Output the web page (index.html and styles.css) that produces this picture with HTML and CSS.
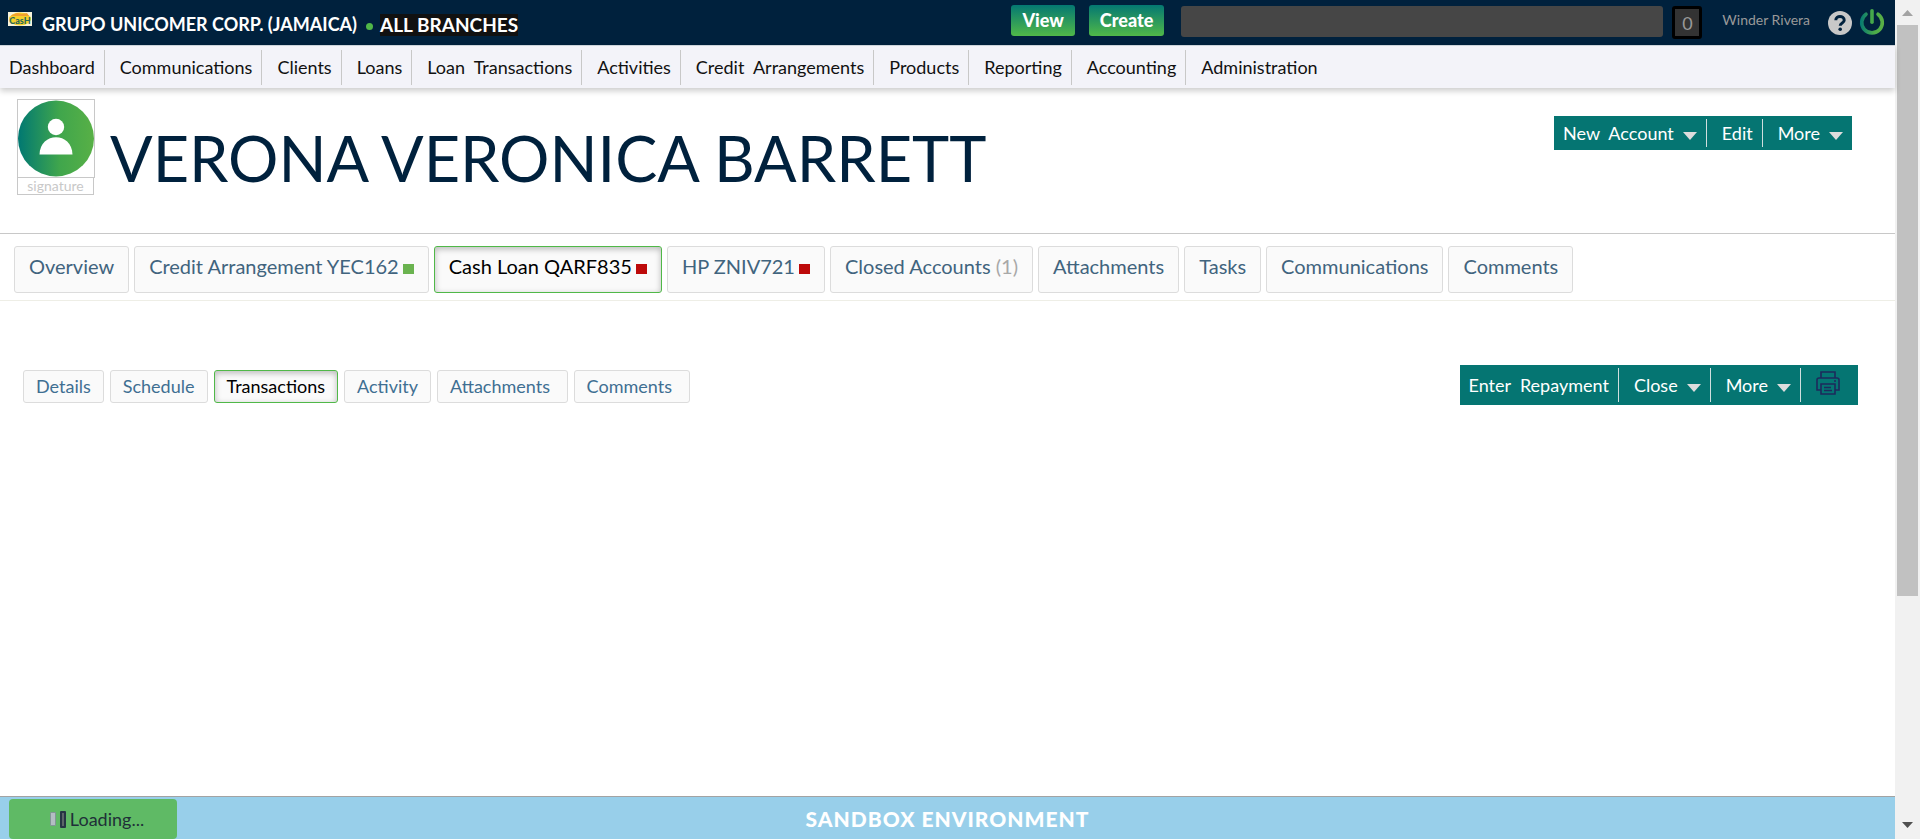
FILE: index.html
```html
<!DOCTYPE html>
<html lang="en">
<head>
<meta charset="utf-8">
<title>Verona Veronica Barrett</title>
<link rel="stylesheet" href="styles.css">
</head>
<body>
<div class="window">
  <div class="app">
    <header class="topbar">
      <svg class="logo" viewBox="0 0 24 14" aria-hidden="true">
        <rect width="24" height="14" fill="#f6f3dc"/>
        <ellipse cx="12" cy="7" rx="11" ry="6.5" fill="#f5d02c"/>
        <path d="M4 3 9 1 14 2 19 1 21 4H3Z" fill="#f0a030"/>
        <text x="12" y="12" text-anchor="middle" class="logo-text">CasH</text>
      </svg>
      <span class="company">GRUPO UNICOMER CORP. (JAMAICA)</span>
      <span class="dot"></span>
      <a class="branches" href="#">ALL BRANCHES</a>
      <div class="tools">
        <button class="green-button">View</button>
        <button class="green-button">Create</button>
        <input class="search" type="text" aria-label="Search">
        <button class="counter">0</button>
        <a class="user" href="#">Winder Rivera</a>
        <a class="tool-icon help" href="#" aria-label="Help">
          <svg viewBox="0 0 24 24" width="24" height="24"><circle cx="12" cy="12" r="12" fill="#c8c8c8"/><path d="M7.8 9.2C7.8 4.200 16.200 4.200 16.200 9.200C16.200 12 12.200 11.800 12.200 14.700" fill="none" stroke="#00213d" stroke-width="3"/><circle cx="12.200" cy="18.200" r="1.800" fill="#00213d"/></svg>
        </a>
        <a class="tool-icon" href="#" aria-label="Log out">
          <svg viewBox="0 0 26 26" width="26" height="26"><defs><linearGradient id="power" gradientUnits="userSpaceOnUse" x1="1" y1="0" x2="25" y2="0"><stop offset="0" stop-color="#047872"/><stop offset=".6" stop-color="#4cab49"/><stop offset="1" stop-color="#5bb045"/></linearGradient></defs><path d="M7 5.200A10.300 10.300 0 1 0 19 5.200" fill="none" stroke="url(#power)" stroke-width="3.600" stroke-linecap="round"/><rect x="11.200" y="0" width="3.600" height="15" rx="1.800" fill="#45a84b"/></svg>
        </a>
      </div>
    </header>
    <nav class="menu">
      <a href="#">Dashboard</a><a href="#">Communications</a><a href="#">Clients</a><a href="#">Loans</a><a href="#">Loan  Transactions</a><a href="#">Activities</a><a href="#">Credit  Arrangements</a><a href="#">Products</a><a href="#">Reporting</a><a href="#">Accounting</a><a href="#">Administration</a>
    </nav>
    <section class="client">
      <div class="portrait">
        <svg class="avatar" viewBox="0 0 76 76" role="img" aria-label="Client photo"><defs><linearGradient id="face"><stop offset="0" stop-color="#007872"/><stop offset=".55" stop-color="#40a64c"/><stop offset="1" stop-color="#58b046"/></linearGradient></defs><circle cx="38" cy="38" r="38" fill="url(#face)"/><circle cx="38" cy="26.500" r="8.200" fill="#fff"/><path d="M21.500 54C22 31 54 31 54.500 54Z" fill="#fff"/></svg>
        <a class="signature" href="#">signature</a>
      </div>
      <h1>VERONA VERONICA BARRETT</h1>
      <div class="actions">
        <button>New  Account<i class="caret"></i></button><button>Edit</button><button>More<i class="caret"></i></button>
      </div>
    </section>
    <nav class="tabs">
      <a href="#">Overview</a>
      <a href="#">Credit Arrangement YEC162<i class="state good"></i></a>
      <a class="current" href="#">Cash Loan QARF835<i class="state bad"></i></a>
      <a href="#">HP ZNIV721<i class="state bad"></i></a>
      <a href="#">Closed Accounts <span class="count">(1)</span></a>
      <a href="#">Attachments</a>
      <a href="#">Tasks</a>
      <a href="#">Communications</a>
      <a href="#">Comments</a>
    </nav>
    <main class="account">
      <nav class="subtabs">
        <a href="#">Details</a>
        <a href="#">Schedule</a>
        <a class="current" href="#">Transactions</a>
        <a href="#">Activity</a>
        <a href="#">Attachments </a>
        <a href="#">Comments </a>
      </nav>
      <div class="actions tall">
        <button>Enter  Repayment</button><button>Close<i class="caret"></i></button><button>More<i class="caret"></i></button><button class="print" aria-label="Print"><svg viewBox="0 0 24 24" width="24" height="24" fill="none" stroke="#1d2a5c" stroke-width="1.600"><path d="M5 7V1H19V7M5 19H1V9Q1 7 3 7H21Q23 7 23 9V19H19M5 13H19V23H5ZM8 16.500H15M8 19.500H16M18 10H20"/></svg></button>
      </div>
    </main>
    <footer class="environment">
      <div class="loading" role="status"><span class="bar pale"></span><span class="bar"></span>Loading...</div>
      <strong>SANDBOX ENVIRONMENT</strong>
    </footer>
  </div>
  <div class="scrollbar" aria-hidden="true">
    <svg viewBox="0 0 11 6" width="11" height="6"><path d="M0 6 5.500 0 11 6Z" fill="#a3a3a3"/></svg>
    <div class="track"><div class="thumb"></div></div>
    <svg viewBox="0 0 11 6" width="11" height="6"><path d="M0 0H11L5.500 6Z" fill="#505050"/></svg>
  </div>
</div>
</body>
</html>
```
FILE: styles.css
```css
* { box-sizing: border-box; }
body { margin: 0; background: #fff; color: #111; font-family: Lato, "Liberation Sans", sans-serif; font-size: 18px; }
a { color: inherit; text-decoration: none; }
button, input { font: inherit; }
.window { display: flex; height: 100vh; }
.app { flex: 1; min-width: 0; display: flex; flex-direction: column; }

.topbar { height: 45px; padding: 0 10px 0 8px; display: flex; align-items: flex-start; background: #00213d; color: #fff; font-weight: 700; white-space: nowrap; }
.logo { width: 24px; height: 14px; margin-top: 12px; flex: none; }
.logo-text { font: 900 9px Lato, sans-serif; fill: #2c6a58; }
.company { margin: 13px 0 0 10px; font-size: 18px; line-height: 22px; }
.dot { width: 7px; height: 7px; margin: 23px 7px 0 9px; border-radius: 50%; background: #50b848; }
.branches { margin-top: 14px; background: #111; font-size: 19px; line-height: 22px; }
.tools { margin-left: auto; display: flex; align-items: flex-start; }
.green-button { height: 31px; margin: 5px 14px 0 0; padding: 0 11px 2px; border: 0; border-radius: 3px; background: linear-gradient(#047872, #50b848); color: #fff; font-weight: 900; }
.search { width: 482px; height: 31px; margin: 6px 9px 0 3px; border: 0; border-radius: 3px; background: #464646; color: #fff; }
.counter { width: 30px; height: 33px; margin-top: 6px; padding: 0; border: 3px solid #000; border-radius: 3px; background: #333; color: #999; font-weight: 400; }
.user { margin: 10px 18px 0 20px; color: #999; font-size: 14px; line-height: 20px; font-weight: 400; }
.tool-icon { display: flex; margin-top: 9px; }
.help { margin: 11px 7px 0 0; }

.menu { z-index: 1; height: 43px; padding: 4px 0 3px; display: flex; border-top: 1px solid #ccd3da; background: #f3f3f9; box-shadow: 0 3px 6px #0003; white-space: pre; }
.menu a { padding: 0 9px 0 15px; border-right: 1px solid #c8c8c8; line-height: 35px; }
.menu a:first-child { padding-left: 9px; }
.menu a:last-child { border: 0; }

.client { height: 146px; padding: 11px 43px 0 17px; display: flex; align-items: flex-start; border-bottom: 1px solid #c8c8c8; }
.portrait { width: 78px; }
.avatar { display: block; width: 78px; height: 79px; border: 1px solid #c8c8c8; }
.signature { display: block; width: 77px; height: 17px; border: 1px solid #c8c8c8; border-top: 0; color: #c8c8c8; font-size: 14px; line-height: 15px; text-align: center; }
h1 { margin: 19px 0 0 15px; color: #00213d; font-size: 63px; font-weight: 400; line-height: 80px; white-space: nowrap; }

.actions { height: 34px; margin: 17px 0 0 auto; padding: 3px 0; display: flex; background: #057572; white-space: pre; }
.actions button { padding: 0 9px 0 15px; display: flex; align-items: center; border: 0; border-right: 1px solid #d0dede; background: none; color: #fff; white-space: pre; }
.actions button:first-child { padding-left: 9px; }
.actions button:last-child { border: 0; }
.actions.tall { height: 40px; margin-top: 0; }
.actions .print { padding: 0 18px 4px 15px; }
.caret { margin: 5px 0 0 9px; border: 7px solid transparent; border-top: 8px solid #ddd; border-bottom: 0; }

.tabs { height: 67px; padding: 12px 14px 0; display: flex; gap: 5px; align-items: flex-start; border-bottom: 1px solid #eeeee6; color: #41647e; font-size: 20px; white-space: nowrap; }
.tabs a, .subtabs a { border: 1px solid #dcdcdc; border-radius: 3px; background: #fafafa; }
.tabs a { height: 47px; padding: 0 14px; line-height: 38px; }
.tabs .current, .subtabs .current { border-color: #50b848; box-shadow: inset 0 2px 6px #0004; color: #000; }
.state { display: inline-block; width: 11px; height: 10px; margin-left: 4px; background: #bd0a0a; }
.good { background: #6ab34f; }
.count { color: #a8a8a8; }

.account { flex: 1; padding: 64px 37px 0 23px; display: flex; align-items: flex-start; }
.subtabs { padding-top: 5px; display: flex; gap: 6px; color: #3f6f92; white-space: pre; }
.subtabs a { height: 33px; padding: 0 12px; line-height: 30px; }

.environment { position: relative; height: 43px; display: flex; align-items: center; justify-content: center; border-top: 1px solid #a3a3a3; background: #98cfea; color: #fff; font-size: 21px; letter-spacing: 1px; }
.environment strong { font-weight: 900; }
.loading { position: absolute; left: 9px; bottom: 0; width: 168px; height: 40px; padding-left: 8px; display: flex; align-items: center; justify-content: center; gap: 4px; border-radius: 4px; background: #5fba65; color: #203038; font-size: 18px; letter-spacing: 0; }
.bar { flex: none; width: 6px; height: 17px; border: 2px solid #263544; border-radius: 1px; background: #5b6668; }
.pale { height: 14px; border: 1px solid #829696; background: #b3bec3; }

.scrollbar { width: 25px; padding: 10px 0 11px; display: flex; flex-direction: column; align-items: center; background: #f1f1f1; }
.scrollbar svg { flex: none; }
.track { flex: 1; width: 21px; margin: 9px 0; }
.thumb { height: 72.4%; background: #c1c1c1; }
```
